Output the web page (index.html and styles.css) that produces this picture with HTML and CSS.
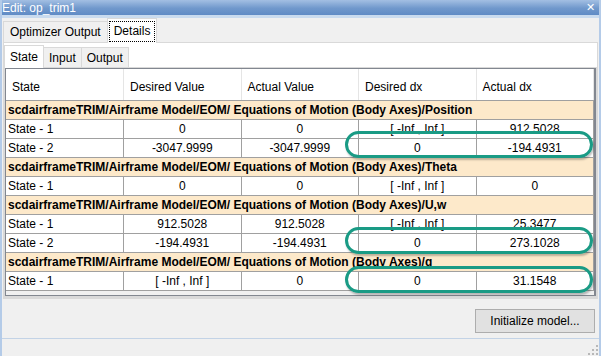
FILE: index.html
```html
<!DOCTYPE html>
<html>
  <head>
    <meta charset="utf-8">
    <title>Edit: op_trim1</title>
    <link rel="stylesheet" href="styles.css">
  </head>
  <body>
    <div class="window">
      <div class="titlebar">
        <span>Edit: op_trim1</span>
        <span class="close">&#x2715;</span>
      </div>
      <div class="client">
        <div class="tabs">
          <div class="tab">Optimizer Output</div>
          <div class="tab active"><span class="focus">Details</span></div>
        </div>
        <div class="panel">
          <div class="tabs sub">
            <div class="tab active">State</div>
            <div class="tab">Input</div>
            <div class="tab">Output</div>
          </div>
          <div class="subpanel">
            <div class="grid">
              <table>
                <thead>
                  <tr>
                    <th>State</th>
                    <th>Desired Value</th>
                    <th>Actual Value</th>
                    <th>Desired dx</th>
                    <th>Actual dx</th>
                  </tr>
                </thead>
                <tbody>
                  <tr class="group"><td colspan="5">scdairframeTRIM/Airframe Model/EOM/ Equations of Motion (Body Axes)/Position</td></tr>
                  <tr><td>State - 1</td><td>0</td><td>0</td><td>[ -Inf , Inf ]</td><td>912.5028</td></tr>
                  <tr><td>State - 2</td><td>-3047.9999</td><td>-3047.9999</td><td>0</td><td>-194.4931</td></tr>
                  <tr class="group"><td colspan="5">scdairframeTRIM/Airframe Model/EOM/ Equations of Motion (Body Axes)/Theta</td></tr>
                  <tr><td>State - 1</td><td>0</td><td>0</td><td>[ -Inf , Inf ]</td><td>0</td></tr>
                  <tr class="group"><td colspan="5">scdairframeTRIM/Airframe Model/EOM/ Equations of Motion (Body Axes)/U,w</td></tr>
                  <tr><td>State - 1</td><td>912.5028</td><td>912.5028</td><td>[ -Inf , Inf ]</td><td>25.3477</td></tr>
                  <tr><td>State - 2</td><td>-194.4931</td><td>-194.4931</td><td>0</td><td>273.1028</td></tr>
                  <tr class="group"><td colspan="5">scdairframeTRIM/Airframe Model/EOM/ Equations of Motion (Body Axes)/q</td></tr>
                  <tr><td>State - 1</td><td>[ -Inf , Inf ]</td><td>0</td><td>0</td><td>31.1548</td></tr>
                </tbody>
              </table>
            </div>
          </div>
        </div>
        <div class="actions">
          <button class="btn">Initialize model...</button>
        </div>
      </div>
      <div class="statusbar">
        <svg class="grip" width="10" height="10" viewBox="0 0 10 10">
          <rect x="8" y="0" width="2" height="2" fill="#b8b8b8"/>
          <rect x="4" y="4" width="2" height="2" fill="#b8b8b8"/>
          <rect x="8" y="4" width="2" height="2" fill="#b8b8b8"/>
          <rect x="0" y="8" width="2" height="2" fill="#b8b8b8"/>
          <rect x="4" y="8" width="2" height="2" fill="#b8b8b8"/>
          <rect x="8" y="8" width="2" height="2" fill="#b8b8b8"/>
        </svg>
      </div>
      <!-- highlight marks drawn over the grid -->
      <div class="mark" style="top: 131px;"></div>
      <div class="mark" style="top: 227px;"></div>
      <div class="mark" style="top: 266px;"></div>
    </div>
  </body>
</html>
```

FILE: styles.css
```css
* {
  box-sizing: border-box;
}

body {
  margin: 0;
  font-family: "Liberation Sans", Arial, sans-serif;
  font-size: 12px;
  color: #000;
  background: #f0f0f0;
}

.window {
  position: relative;
  width: 601px;
  height: 356px;
  display: flex;
  flex-direction: column;
  overflow: hidden;
  border-left: 2px solid #b4cbe8;
  border-right: 2px solid #b4cbe8;
}

.titlebar {
  height: 15px;
  margin: 0 -2px;
  padding: 0 6px 0 2px;
  display: flex;
  justify-content: space-between;
  align-items: center;
  color: #fff;
  font-size: 12px;
  background: linear-gradient(#a3bfe3, #7098cc 55%, #5f8bc5);
}

.close {
  font-size: 11px;
}

.client {
  flex: 1;
  display: flex;
  flex-direction: column;
  border-top: 3px solid #c9dbef;
  background: #f0f0f0;
}

.tabs {
  height: 24px;
  display: flex;
  align-items: flex-end;
  padding-left: 1px;
}

.tab {
  height: 21px;
  padding: 0 6px;
  display: flex;
  align-items: center;
  border: 1px solid #d9d9d9;
  border-bottom: none;
  background: #f0f0f0;
  margin-right: -1px;
}

.tab.active {
  height: 25px;
  margin-bottom: -1px;
  background: #fff;
  position: relative;
  z-index: 1;
  padding: 0 1px;
}

.focus {
  height: 21px;
  padding: 0 4px;
  display: flex;
  align-items: center;
  border: 1px dotted #000;
}

.panel {
  height: 257px;
  margin: 0 1px;
  border: 1px solid #d9d9d9;
  background: #fff;
  display: flex;
  flex-direction: column;
}

.tabs.sub {
  height: 25px;
  padding-left: 0;
}

.tabs.sub .tab {
  height: 20px;
  padding: 0 5px;
}

.tabs.sub .tab.active {
  height: 23px;
  padding: 0 5px;
}

.subpanel {
  flex: 1;
  border: 1px solid #d9d9d9;
  border-bottom: 2px solid #d9d9d9;
}

.grid {
  height: 228px;
  border: 1px solid #828790;
  border-right-width: 2px;
  background: #f0f0f0;
}

table {
  width: 100%;
  table-layout: fixed;
  border-collapse: collapse;
}

th {
  height: 31px;
  padding: 6px 0 0 6px;
  text-align: left;
  font-weight: normal;
  background: #fff;
  border-right: 1px solid #e5e5e5;
  border-bottom: 1px solid #a0a0a0;
}

td {
  height: 19px;
  padding: 0 2px;
  text-align: center;
  background: #fff;
  border: 1px solid #a0a0a0;
  white-space: nowrap;
}

td:first-child {
  text-align: left;
  border-left: none;
}

tr.group td {
  text-align: left;
  font-weight: bold;
  background: #fde9ca;
}

.actions {
  flex: 1;
  display: flex;
  justify-content: flex-end;
  align-items: flex-start;
  padding: 10px 4px 0 0;
}

.btn {
  width: 120px;
  height: 24px;
  font-family: inherit;
  font-size: 12px;
  color: #000;
  background: #e1e1e1;
  border: 1px solid #adadad;
  padding: 0;
}

.statusbar {
  height: 18px;
  border-top: 1px solid #c3d3e6;
  background: #f0f0f0;
  display: flex;
  justify-content: flex-end;
  align-items: flex-end;
  padding: 0 1px 1px 0;
}

.mark {
  position: absolute;
  left: 343px;
  width: 248px;
  height: 27px;
  border: 3px solid #1a9b85;
  border-radius: 14px;
  box-shadow: 1px 2px 2px rgba(0, 0, 0, 0.25);
}
```
